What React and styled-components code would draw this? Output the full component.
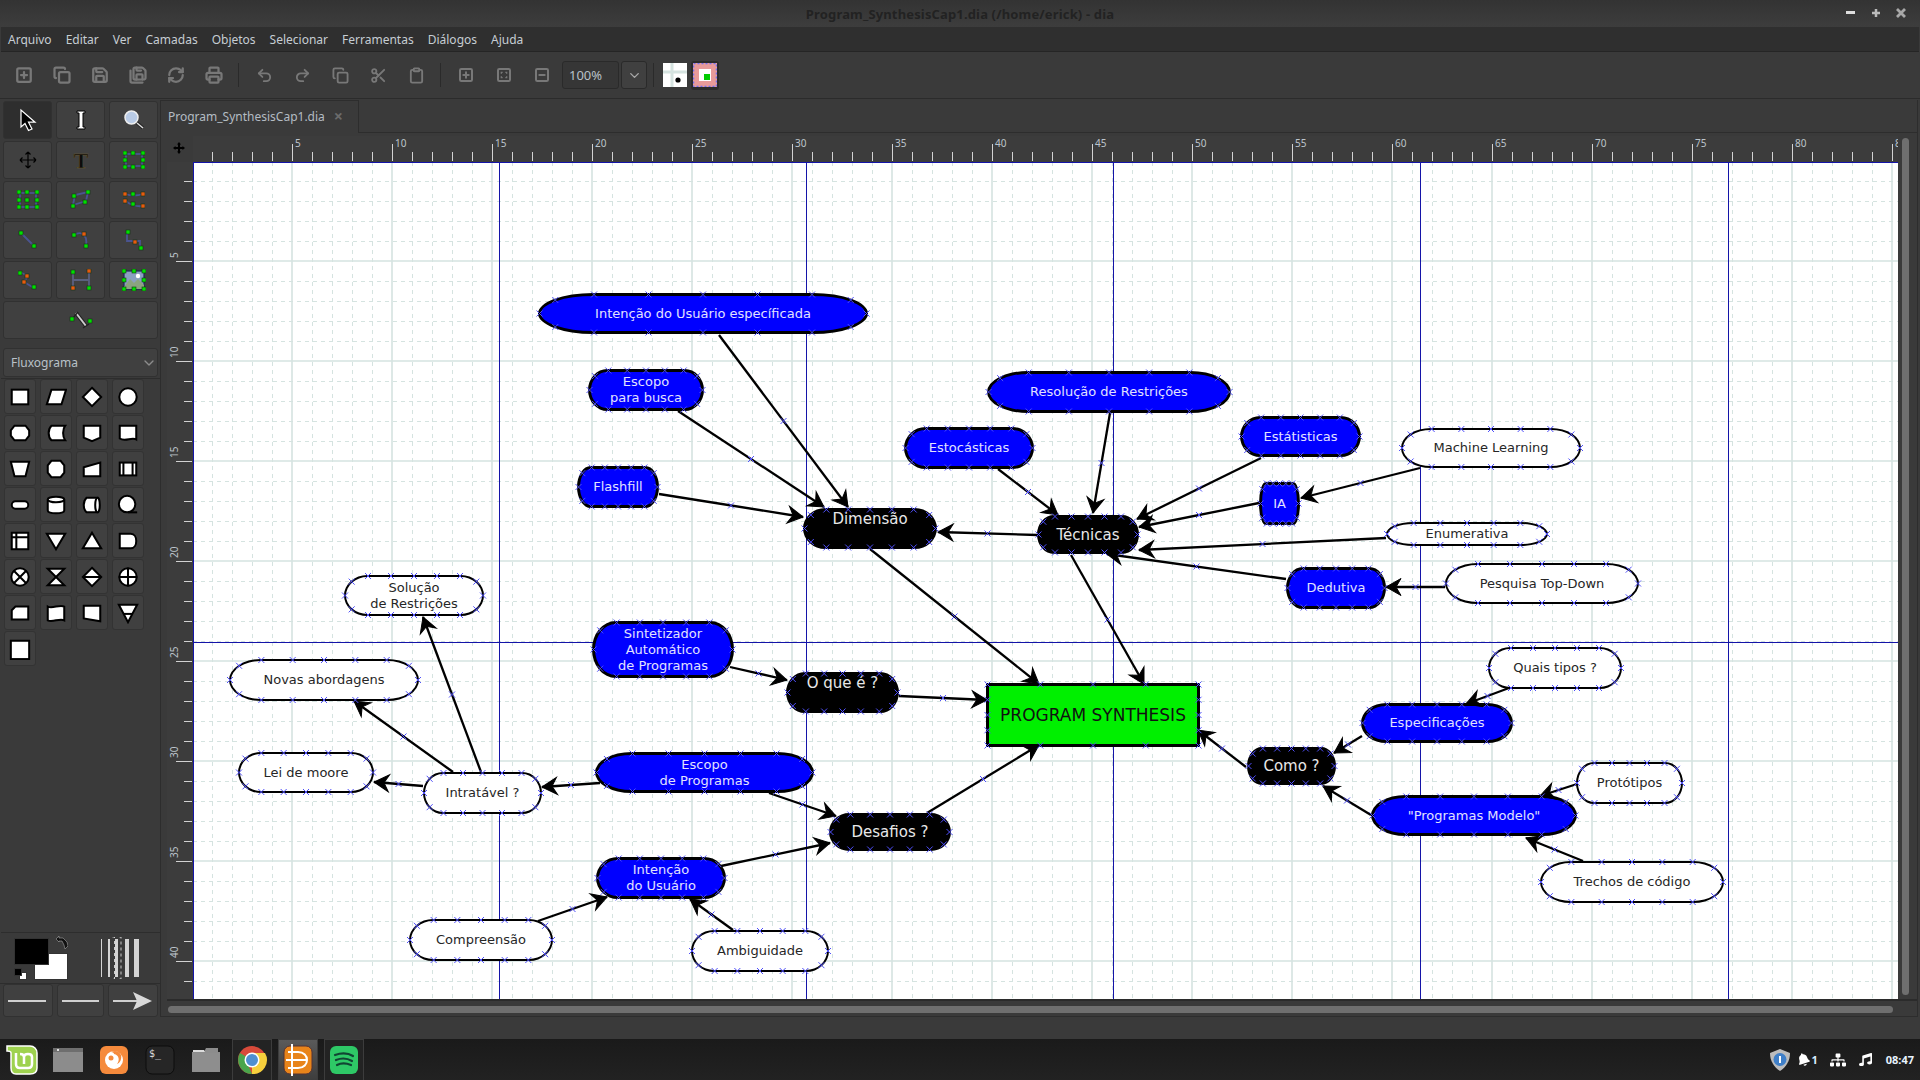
import React from "react";
import styled, { createGlobalStyle } from "styled-components";
import {
  SquarePlus, Copy, Save, SaveAll, RefreshCw, Printer, Undo2, Redo2, Scissors, Clipboard, SquareMinus, ChevronDown,
} from "lucide-react";
import { FaBell, FaSitemap, FaMusic } from "react-icons/fa";

const Global = createGlobalStyle`
  html, body { margin: 0; padding: 0; background: #3a3a3a; overflow: hidden; }
  body { font-family: "Noto Sans", sans-serif; font-size: 12px; color: #c9d0d6; }
`;

// canvas origin in page coordinates
const OX = 193;
const OY = 162;
const CW = 1704;
const CH = 836;

const Screen = styled.div`
  width: 1920px;
  height: 1080px;
  display: flex;
  flex-direction: column;
  background: #3a3a3a;
  overflow: hidden;
`;

const TitleBar = styled.div`
  height: 27px;
  flex: none;
  position: relative;
  display: flex;
  align-items: center;
  justify-content: center;
  background: linear-gradient(#333333, #3d3d3d);
`;

const TitleText = styled.span`
  font-weight: 700;
  font-size: 13px;
  letter-spacing: 0.15px;
  color: #222222;
`;

const WinControls = styled.div`
  position: absolute;
  right: 11px;
  top: 5px;
  display: flex;
  gap: 9px;
`;

const WinButton = styled.div`
  width: 16px;
  height: 16px;
  display: flex;
  align-items: center;
  justify-content: center;
`;

const MenuBar = styled.div`
  height: 25px;
  flex: none;
  display: flex;
  align-items: center;
  gap: 14px;
  padding-left: 7px;
  margin: 0 1px;
  background: #2f2f2f;
  border-bottom: 1px solid #252525;
  box-sizing: border-box;
  color: #c6cdd3;
`;

const ToolBar = styled.div`
  height: 47px;
  flex: none;
  display: flex;
  align-items: center;
  padding-left: 5px;
  background: #3a3a3a;
  border-bottom: 1px solid #2b2b2b;
  box-sizing: border-box;
`;

const BarButton = styled.div`
  width: 38px;
  height: 30px;
  display: flex;
  align-items: center;
  justify-content: center;
  color: #787878;
`;

const BarSep = styled.div`
  width: 1px;
  height: 24px;
  margin: 0 6px 0 5px;
  background: #2a2a2a;
`;

const ThumbSep = styled(BarSep)`
  margin: 0 7px 0 6px;
`;

const ZoomEntry = styled.div`
  width: 57px;
  height: 28px;
  margin-left: 1px;
  box-sizing: border-box;
  display: flex;
  align-items: center;
  padding-left: 6px;
  font-size: 13px;
  color: #b9c1c8;
  background: #363636;
  border: 1px solid #2a2a2a;
  border-radius: 3px;
`;

const ZoomArrow = styled.div`
  width: 26px;
  height: 28px;
  margin-left: 2px;
  box-sizing: border-box;
  display: flex;
  align-items: center;
  justify-content: center;
  color: #a8a8a8;
  background: #404040;
  border: 1px solid #2a2a2a;
  border-radius: 3px;
`;

const Thumb = styled.div`
  width: 28px;
  height: 29px;
  margin-left: ${(p) => (p.$pressed ? "2px" : "0")};
  display: flex;
  align-items: center;
  justify-content: center;
  border-radius: 3px;
  background: ${(p) => (p.$pressed ? "#2b2b2b" : "transparent")};
`;

const Main = styled.div`
  height: 918px;
  flex: none;
  display: flex;
`;

const SidePanel = styled.div`
  width: 160px;
  flex: none;
  display: flex;
  flex-direction: column;
`;

const ToolGrid = styled.div`
  display: grid;
  grid-template-columns: repeat(3, 49px);
  grid-auto-rows: 38px;
  gap: 2px 4px;
  padding: 2px 0 0 3px;
`;

const ToolButton = styled.div`
  display: flex;
  align-items: center;
  justify-content: center;
  grid-column: ${(p) => (p.$wide ? "span 3" : "auto")};
  background: ${(p) => (p.$active ? "#2e2e2e" : "#404040")};
  border: 1px solid #313131;
  border-radius: 3px;
  box-sizing: border-box;
`;

const Combo = styled.div`
  height: 29px;
  margin: 9px 2px 1px 3px;
  padding: 0 0 0 7px;
  display: flex;
  align-items: center;
  justify-content: space-between;
  font-size: 12px;
  color: #b9c1c8;
  background: #404040;
  border: 1px solid #313131;
  border-radius: 3px;
  box-sizing: border-box;
`;

const ShapeBox = styled.div`
  height: 555px;
  flex: none;
  margin-left: 1px;
  padding: 0 0 0 3px;
  display: grid;
  grid-template-columns: repeat(4, 32px);
  grid-auto-rows: 35px;
  gap: 1px 4px;
  align-content: start;
  border: 1px solid #2d2d2d;
  border-width: 1px 0 1px 0;
  box-sizing: border-box;
`;

const ShapeButton = styled.div`
  display: flex;
  align-items: center;
  justify-content: center;
  background: #404040;
  border: 1px solid #333333;
  border-radius: 3px;
  box-sizing: border-box;
`;

const ColorRow = styled.div`
  height: 51px;
  flex: none;
  display: flex;
  align-items: center;
  padding-left: 14px;
  gap: 34px;
  border-bottom: 1px solid #2d2d2d;
  box-sizing: border-box;
`;

const ColorWell = styled.div`
  position: relative;
  width: 53px;
  height: 44px;
`;

const Swatch = styled.div`
  position: absolute;
  left: ${(p) => p.$x}px;
  top: ${(p) => p.$y}px;
  width: ${(p) => p.$w}px;
  height: ${(p) => p.$h}px;
  background: ${(p) => (p.$dark ? "#000000" : "#ffffff")};
  border: 1px solid #333333;
  box-sizing: border-box;
`;

const SwapIcon = styled.svg`
  position: absolute;
  left: 41px;
  top: 0;
`;

const LineRow = styled.div`
  display: grid;
  grid-template-columns: 50px 47px 50px;
  gap: 4px;
  height: 33px;
  padding: 0 0 0 3px;
  box-sizing: border-box;
`;

const LineButton = styled(ToolButton)``;

const Notebook = styled.div`
  width: 1758px;
  flex: none;
  display: flex;
  flex-direction: column;
  border-right: 1px solid #2d2d2d;
  border-bottom: 1px solid #2d2d2d;
  border-left: 1px solid #2d2d2d;
  margin-top: 1px;
  box-sizing: border-box;
`;

const TabStrip = styled.div`
  height: 33px;
  flex: none;
  display: flex;
  box-sizing: border-box;
  border-bottom: 1px solid #2d2d2d;
`;

const Tab = styled.div`
  width: 198px;
  height: 33px;
  flex: none;
  display: flex;
  align-items: center;
  justify-content: space-between;
  padding: 0 15px 2px 7px;
  box-sizing: border-box;
  font-size: 12px;
  color: #b4bcc3;
  background: #3a3a3a;
  border: 1px solid #2d2d2d;
  border-width: 1px 1px 0 0;
`;

const TabClose = styled.span`
  font-size: 16px;
  font-weight: 700;
  color: #6b6b6b;
  line-height: 1;
`;

const CanvasArea = styled.div`
  flex: 1;
  padding: 3px 0 0 6px;
  display: grid;
  grid-template-columns: 26px 1705px 1fr;
  grid-template-rows: 26px 837px 1fr;
  min-height: 0;
`;

const Corner = styled.div`
  display: flex;
  align-items: center;
  justify-content: center;
  padding: 0 2px 2px 0;
  background: #3a3a3a;
`;

const RulerSvg = styled.svg`
  display: block;
  background: #3c3c3c;
`;

const VScroll = styled.div`
  grid-row: 1 / span 2;
  grid-column: 3;
  padding: 2px 0 0 4px;
`;

const ScrollThumb = styled.div`
  background: #6f6f6f;
  border-radius: 4px;
  width: ${(p) => (p.$horizontal ? "1725px" : "7px")};
  height: ${(p) => (p.$horizontal ? "7px" : "857px")};
`;

const HScroll = styled.div`
  grid-column: 1 / span 3;
  grid-row: 3;
  padding: 5px 0 0 1px;
  border-top: 2px solid #2b2b2b;
`;

const Canvas = styled.div`
  position: relative;
  overflow: hidden;
  background: #ffffff;
  width: ${CW + 1}px;
  height: ${CH + 1}px;
`;

const Layer = styled.svg`
  position: absolute;
  left: 0;
  top: 0;
`;

const skins = {
  blue: { bg: "#0000ff", fg: "#e2e2ff", size: 13, line: 3 },
  white: { bg: "#ffffff", fg: "#262626", size: 13, line: 2 },
  black: { bg: "#000000", fg: "#e8e8e8", size: 15, line: 3 },
  rect: { bg: "#00f000", fg: "#111111", size: 17, line: 3 },
};

const Node = styled.div.attrs(({ $n }) => ({
  style: {
    left: $n.x0 - OX,
    top: $n.y0 - OY,
    width: $n.x1 - $n.x0,
    height: $n.y1 - $n.y0,
    borderRadius: $n.kind === "rect" ? 0 : `${(($n.x1 - $n.x0) / 6).toFixed(1)}px / 50%`,
  },
}))`
  position: absolute;
  box-sizing: border-box;
  display: flex;
  align-items: ${(p) => (p.$n.up ? "flex-start" : "center")};
  justify-content: center;
  text-align: center;
  font-family: "DejaVu Sans", sans-serif;
  line-height: 16px;
  white-space: nowrap;
  border: ${(p) => skins[p.$n.kind].line}px solid #000000;
  background: ${(p) => skins[p.$n.kind].bg};
  color: ${(p) => skins[p.$n.kind].fg};
  font-size: ${(p) => skins[p.$n.kind].size}px;
`;

const TaskBar = styled.div`
  height: 41px;
  flex: none;
  margin-top: auto;
  display: flex;
  align-items: stretch;
  justify-content: space-between;
  padding-left: 2px;
  background: linear-gradient(#1a1a1a, #222222);
`;

const Launchers = styled.div`
  display: flex;
  gap: 6px;
`;

const Launcher = styled.div`
  width: 40px;
  display: flex;
  align-items: center;
  justify-content: center;
  box-sizing: border-box;
  border: ${(p) => (p.$state ? "1px solid #3c3c3c" : "1px solid transparent")};
  border-bottom: none;
  background: ${(p) => (p.$state === "focus" ? "linear-gradient(#5a5a5a, #3d3d3d)" : p.$state ? "#232323" : "transparent")};
`;

const Tray = styled.div`
  display: flex;
  align-items: center;
  padding-right: 6px;
  color: #ffffff;
`;

const TrayCount = styled.span`
  font-size: 11px;
  font-weight: 700;
  margin: 0 12px 0 1px;
  color: #d9ecff;
`;

const TraySlot = styled.div`
  display: flex;
  align-items: center;
  margin-right: ${(p) => p.$gap}px;
`;

const Bell = styled(FaBell)`
  transform: rotate(-18deg);
`;

const Clock = styled.span`
  font-size: 11px;
  font-weight: 700;
  color: #e8f3ff;
`;

// ---- diagram data, page coordinates ----
const nodes = [
  { id: "a", t: ["Intenção do Usuário específicada"], x0: 538, x1: 868, y0: 293, y1: 334, kind: "blue" },
  { id: "b", t: ["Escopo", "para busca"], x0: 588, x1: 704, y0: 369, y1: 411, kind: "blue" },
  { id: "c", t: ["Flashfill"], x0: 577, x1: 659, y0: 466, y1: 508, kind: "blue" },
  { id: "d", t: ["Dimensão"], x0: 803, x1: 937, y0: 508, y1: 549, kind: "black", up: 1 },
  { id: "e", t: ["Resolução de Restrições"], x0: 987, x1: 1231, y0: 371, y1: 413, kind: "blue" },
  { id: "f", t: ["Estocásticas"], x0: 904, x1: 1034, y0: 427, y1: 469, kind: "blue" },
  { id: "g", t: ["Estátisticas"], x0: 1240, x1: 1361, y0: 416, y1: 457, kind: "blue" },
  { id: "h", t: ["Machine Learning"], x0: 1401, x1: 1581, y0: 428, y1: 468, kind: "white" },
  { id: "i", t: ["IA"], x0: 1259, x1: 1300, y0: 482, y1: 525, kind: "blue" },
  { id: "j", t: ["Técnicas"], x0: 1037, x1: 1139, y0: 515, y1: 554, kind: "black" },
  { id: "k", t: ["Enumerativa"], x0: 1386, x1: 1548, y0: 522, y1: 546, kind: "white" },
  { id: "l", t: ["Dedutiva"], x0: 1286, x1: 1386, y0: 567, y1: 609, kind: "blue" },
  { id: "m", t: ["Pesquisa Top-Down"], x0: 1445, x1: 1639, y0: 563, y1: 604, kind: "white" },
  { id: "n", t: ["Solução", "de Restrições"], x0: 344, x1: 484, y0: 575, y1: 616, kind: "white" },
  { id: "o", t: ["Sintetizador", "Automático", "de Programas"], x0: 592, x1: 734, y0: 621, y1: 678, kind: "blue" },
  { id: "p", t: ["O que é ?"], x0: 786, x1: 899, y0: 672, y1: 713, kind: "black", up: 1 },
  { id: "q", t: ["PROGRAM SYNTHESIS"], x0: 986, x1: 1200, y0: 683, y1: 747, kind: "rect" },
  { id: "r", t: ["Como ?"], x0: 1247, x1: 1336, y0: 747, y1: 785, kind: "black" },
  { id: "s", t: ["Quais tipos ?"], x0: 1488, x1: 1622, y0: 647, y1: 689, kind: "white" },
  { id: "t", t: ["Especificações"], x0: 1361, x1: 1513, y0: 703, y1: 743, kind: "blue" },
  { id: "u", t: ["Novas abordagens"], x0: 229, x1: 419, y0: 659, y1: 701, kind: "white" },
  { id: "v", t: ["Lei de moore"], x0: 238, x1: 374, y0: 752, y1: 793, kind: "white" },
  { id: "w", t: ["Intratável ?"], x0: 423, x1: 542, y0: 772, y1: 814, kind: "white" },
  { id: "x", t: ["Escopo", "de Programas"], x0: 595, x1: 814, y0: 752, y1: 793, kind: "blue" },
  { id: "y", t: ["Desafios ?"], x0: 829, x1: 951, y0: 813, y1: 851, kind: "black" },
  { id: "z", t: ["Protótipos"], x0: 1576, x1: 1683, y0: 762, y1: 804, kind: "white" },
  { id: "aa", t: ['"Programas Modelo"'], x0: 1371, x1: 1577, y0: 795, y1: 836, kind: "blue" },
  { id: "ab", t: ["Intenção", "do Usuário"], x0: 596, x1: 726, y0: 857, y1: 899, kind: "blue" },
  { id: "ac", t: ["Compreensão"], x0: 409, x1: 553, y0: 919, y1: 961, kind: "white" },
  { id: "ad", t: ["Ambiguidade"], x0: 691, x1: 829, y0: 930, y1: 972, kind: "white" },
  { id: "ae", t: ["Trechos de código"], x0: 1540, x1: 1724, y0: 861, y1: 903, kind: "white" },
];

const arrows = [
  [719, 335, 848, 507], [678, 411, 824, 507], [659, 494, 803, 517], [870, 549, 1039, 684],
  [1037, 535, 938, 532], [1071, 555, 1144, 684], [1110, 413, 1093, 513], [998, 469, 1058, 515],
  [1261, 458, 1137, 519], [1259, 503, 1139, 527], [1420, 468, 1301, 498], [1386, 538, 1139, 550],
  [1286, 579, 1107, 554], [1445, 587, 1386, 587], [899, 696, 987, 700], [730, 667, 787, 680],
  [927, 813, 1039, 745], [1246, 767, 1198, 730], [1362, 736, 1334, 753], [1371, 815, 1323, 786],
  [1509, 688, 1466, 704], [1577, 784, 1540, 796], [1583, 861, 1526, 838], [481, 772, 423, 617],
  [453, 772, 354, 701], [423, 786, 374, 782], [600, 783, 542, 787], [769, 793, 836, 816],
  [721, 866, 830, 843], [538, 921, 607, 897], [733, 930, 690, 899],
];

const guidesX = [499, 806, 1113, 1420, 1728];
const guidesY = [642];

function range(from, to, step) {
  const out = [];
  for (let v = from; v <= to; v += step) out.push(v);
  return out;
}

// connection points of a flowchart shape, they sit on the middle of the outline
function crossesFor(n) {
  const inset = n.kind === "white" ? 1 : 1.5;
  const x0 = n.x0 + inset;
  const x1 = n.x1 - inset;
  const y0 = n.y0 + inset;
  const y1 = n.y1 - inset;
  const w = x1 - x0;
  const h = y1 - y0;
  const pts = [];
  if (n.kind === "rect") {
    for (let k = 0; k <= 4; k++) {
      pts.push([x0 + (w * k) / 4, y0], [x0 + (w * k) / 4, y1]);
      if (k > 0 && k < 4) pts.push([x0, y0 + (h * k) / 4], [x1, y0 + (h * k) / 4]);
    }
    return pts;
  }
  for (let k = 1; k <= 5; k++) pts.push([x0 + (w * k) / 6, y0], [x0 + (w * k) / 6, y1]);
  const dx = (w / 6) * 0.29;
  const dy = (h / 2) * 0.29;
  pts.push(
    [x0, y0 + h / 2], [x1, y0 + h / 2],
    [x0 + dx, y0 + dy], [x1 - dx, y0 + dy],
    [x0 + dx, y1 - dy], [x1 - dx, y1 - dy]
  );
  return pts;
}

function Cross({ x, y }) {
  return <path d={`M${x - 3} ${y - 3}L${x + 3} ${y + 3}M${x + 3} ${y - 3}L${x - 3} ${y + 3}`} stroke="#5050fa" strokeWidth="1" fill="none" />;
}

function Arrow({ a }) {
  const [x1, y1, x2, y2] = a;
  const angle = (Math.atan2(y2 - y1, x2 - x1) * 180) / Math.PI;
  return (
    <g>
      <line x1={x1} y1={y1} x2={x2} y2={y2} stroke="#000" strokeWidth="2.3" />
      <path d="M0 0L-15 -8.5L-10 0L-15 8.5Z" fill="#000" stroke="#000" strokeWidth="1" transform={`translate(${x2} ${y2}) rotate(${angle})`} />
      <Cross x={(x1 + x2) / 2} y={(y1 + y2) / 2} />
    </g>
  );
}

function GridLayer() {
  return (
    <Layer width={CW + 1} height={CH + 1} viewBox={`${OX} ${OY} ${CW + 1} ${CH + 1}`}>
      <g stroke="#d5e3e0" strokeWidth="1" strokeDasharray="4 4" fill="none">
        {range(212, 1896, 20).filter((x) => x % 100 !== 92).map((x) => <line key={x} x1={x + 0.5} x2={x + 0.5} y1={OY} y2={OY + CH + 1} />)}
        {range(181, 997, 20).filter((y) => y % 100 !== 61).map((y) => <line key={y} y1={y + 0.5} y2={y + 0.5} x1={OX} x2={OX + CW + 1} />)}
      </g>
      <g stroke="#d5e3e0" strokeWidth="1.6" fill="none">
        {range(292, 1896, 100).map((x) => <line key={x} x1={x} x2={x} y1={OY} y2={OY + CH + 1} />)}
        {range(261, 997, 100).map((y) => <line key={y} y1={y} y2={y} x1={OX} x2={OX + CW + 1} />)}
      </g>
      <g stroke="#1414a8" strokeWidth="1" fill="none">
        {guidesX.map((x) => <line key={x} x1={x + 0.5} x2={x + 0.5} y1={OY} y2={OY + CH + 1} />)}
        {guidesY.map((y) => <line key={y} y1={y + 0.5} y2={y + 0.5} x1={OX} x2={OX + CW + 1} />)}
        <line x1={OX} x2={OX + CW + 1} y1={OY} y2={OY} strokeWidth="2" />
        <line x1={OX} x2={OX} y1={OY} y2={OY + CH + 1} strokeWidth="2" />
      </g>
    </Layer>
  );
}

function TopLayer() {
  return (
    <Layer width={CW + 1} height={CH + 1} viewBox={`${OX} ${OY} ${CW + 1} ${CH + 1}`}>
      {arrows.map((a, i) => <Arrow key={i} a={a} />)}
      {nodes.flatMap((n) => crossesFor(n).map(([x, y], i) => <Cross key={n.id + i} x={x} y={y} />))}
    </Layer>
  );
}

function TopRuler() {
  return (
    <RulerSvg width={1705} height={26} viewBox="193 136 1705 26">
      <g stroke="#d2d2d2" strokeWidth="1">
        {range(212, 1896, 20).map((x) => <line key={x} x1={x + 0.5} x2={x + 0.5} y1={x % 100 === 92 ? 144 : 152} y2={161} />)}
      </g>
      <g fill="#bcc4cb" fontFamily="Noto Sans, sans-serif" fontSize="10">
        {range(5, 85, 5).map((v) => <text key={v} x={192 + v * 20 + 3} y={147}>{v}</text>)}
      </g>
    </RulerSvg>
  );
}

function LeftRuler() {
  return (
    <RulerSvg width={26} height={837} viewBox="167 162 26 837">
      <g stroke="#d2d2d2" strokeWidth="1">
        {range(181, 997, 20).map((y) => <line key={y} y1={y + 0.5} y2={y + 0.5} x1={y % 100 === 61 ? 176 : 184} x2={192} />)}
      </g>
      <g fill="#bcc4cb" fontFamily="Noto Sans, sans-serif" fontSize="10">
        {range(5, 40, 5).map((v) => {
          const y = 161 + v * 20 - 3;
          return <text key={v} x={178} y={y} transform={`rotate(-90 178 ${y})`}>{v}</text>;
        })}
      </g>
    </RulerSvg>
  );
}

// ---- tool palette ----
function Pt({ x, y, c = "#00e000" }) {
  return <rect x={x - 2} y={y - 2} width="4" height="4" fill={c} stroke="#123312" strokeWidth="0.6" />;
}

const ghost = { stroke: "#4a5490", strokeWidth: 1.8, fill: "none" };
const R = "#e85a10";

const toolIcons = [
  <svg width="22" height="24" viewBox="0 0 22 24"><path d="M4 2V19L8 15.5L11.5 22.5L15 21L11.5 14.2H18Z" fill="#000" stroke="#fff" strokeWidth="1.2" /></svg>,
  <svg width="14" height="22" viewBox="0 0 14 22"><path d="M3 2H11V4H9V18H11V20H3V18H5V4H3Z" fill="#fff" stroke="#000" strokeWidth="1" /></svg>,
  <svg width="22" height="22" viewBox="0 0 22 22"><line x1="13" y1="13" x2="20" y2="19" stroke="#222" strokeWidth="3.5" /><line x1="14" y1="14" x2="20" y2="19" stroke="#ddd" strokeWidth="1.5" /><circle cx="8.5" cy="8.5" r="6.5" fill="#b9cbe6" stroke="#eee" strokeWidth="1.5" /></svg>,
  <svg width="18" height="18" viewBox="0 0 18 18"><path d="M9 1V17M1 9H17M9 1L6.5 3.5M9 1L11.5 3.5M9 17L6.5 14.5M9 17L11.5 14.5M1 9L3.5 6.5M1 9L3.5 11.5M17 9L14.5 6.5M17 9L14.5 11.5" stroke="#000" strokeWidth="1.2" fill="none" /></svg>,
  <svg width="20" height="24" viewBox="0 0 20 24"><text x="10" y="20" textAnchor="middle" fontFamily="Liberation Serif, serif" fontWeight="700" fontSize="22" fill="#0c0c0c" stroke="#6d5c2c" strokeWidth="0.4">T</text></svg>,
  <svg width="22" height="18" viewBox="0 0 22 18"><rect x="3" y="3" width="16" height="12" {...ghost} /><Pt x={2} y={2} /><Pt x={10} y={2} /><Pt x={20} y={2} /><Pt x={2} y={9} /><Pt x={20} y={9} /><Pt x={2} y={16} /><Pt x={10} y={16} /><Pt x={20} y={16} /></svg>,
  <svg width="22" height="20" viewBox="0 0 22 20"><rect x="3" y="3" width="16" height="14" {...ghost} /><Pt x={2} y={2} /><Pt x={10} y={2} /><Pt x={20} y={2} /><Pt x={2} y={10} /><Pt x={10} y={10} /><Pt x={20} y={10} /><Pt x={2} y={17} /><Pt x={10} y={17} /><Pt x={20} y={17} /></svg>,
  <svg width="22" height="20" viewBox="0 0 22 20"><path d="M3 15L5 5L18 2L16 11Z" {...ghost} /><Pt x={3} y={16} /><Pt x={4} y={6} /><Pt x={18} y={2} /><Pt x={15} y={12} /></svg>,
  <svg width="22" height="18" viewBox="0 0 22 18"><path d="M2 3C8 5 14 5 20 3M2 9C6 14 14 16 20 15" {...ghost} /><Pt x={2} y={3} c={R} /><Pt x={10} y={3} /><Pt x={20} y={3} c={R} /><Pt x={2} y={10} c={R} /><Pt x={10} y={13} /><Pt x={20} y={15} c={R} /></svg>,
  <svg width="20" height="20" viewBox="0 0 20 20"><path d="M3 3L16 16" {...ghost} /><Pt x={3} y={3} /><Pt x={16} y={16} /></svg>,
  <svg width="20" height="20" viewBox="0 0 20 20"><path d="M3 5C9 1 17 3 15 16" {...ghost} /><Pt x={3} y={5} /><Pt x={13} y={4} c={R} /><Pt x={15} y={16} /></svg>,
  <svg width="20" height="22" viewBox="0 0 20 22"><path d="M3 3V12H16V19" {...ghost} /><Pt x={4} y={3} /><Pt x={11} y={13} c={R} /><Pt x={17} y={19} /></svg>,
  <svg width="20" height="20" viewBox="0 0 20 20"><path d="M2 2L10 6L6 12L16 18" {...ghost} /><Pt x={2} y={3} /><Pt x={9} y={6} c={R} /><Pt x={6} y={12} c={R} /><Pt x={16} y={17} /></svg>,
  <svg width="22" height="22" viewBox="0 0 22 22"><path d="M3 3V19M3 11H19M19 3V19" {...ghost} stroke="#5a6080" /><Pt x={3} y={3} /><Pt x={19} y={2} c={R} /><Pt x={3} y={19} c={R} /><Pt x={19} y={19} /></svg>,
  <svg width="24" height="22" viewBox="0 0 24 22"><rect x="2" y="2" width="20" height="18" fill="#8aa0c0" stroke="#1d2c55" strokeWidth="1.2" /><path d="M2 18L8 10L12 14L16 10L22 16V20H2Z" fill="#8aa37f" /><circle cx="16" cy="7" r="2.2" fill="#fff" /><Pt x={2} y={2} /><Pt x={12} y={2} /><Pt x={22} y={2} /><Pt x={2} y={11} /><Pt x={22} y={11} /><Pt x={2} y={20} /><Pt x={12} y={20} /><Pt x={22} y={20} /></svg>,
  <svg width="24" height="20" viewBox="0 0 24 20"><path d="M7 3L17 16" stroke="#222" strokeWidth="4" /><path d="M7 3L17 16" stroke="#ccc" strokeWidth="2" /><path d="M4 8L9 2M14 18L20 14" stroke="#222" strokeWidth="1.2" /><Pt x={3} y={9} /><Pt x={21} y={11} /></svg>,
];

const S = { fill: "#fff", stroke: "#000", strokeWidth: 2.2, strokeLinejoin: "miter" };

const shapes = [
  <rect x="3" y="4" width="18" height="16" {...S} />,
  <path d="M7 4H23L18 20H2Z" {...S} />,
  <path d="M12 2L22 12L12 22L2 12Z" {...S} />,
  <circle cx="12" cy="12" r="9.5" {...S} />,
  <path d="M6 4H18L22 9V15L18 20H6L2 15V9Z" {...S} />,
  <path d="M7 4H22C19 8 19 16 22 20H7C3 16 3 8 7 4Z" {...S} />,
  <path d="M3 4H21V17L12 21L3 17Z" {...S} />,
  <path d="M3 4H21V19C16 16 9 22 3 18Z" {...S} />,
  <path d="M2 4H22L18 20H6Z" {...S} />,
  <path d="M7 3H17L21 8V16L17 21H7L3 16V8Z" {...S} />,
  <path d="M3 10L21 5V20H3Z" {...S} />,
  <><rect x="3" y="5" width="18" height="14" {...S} /><path d="M7 5V19M17 5V19" {...S} /></>,
  <rect x="3" y="8" width="18" height="8" rx="4" {...S} />,
  <><path d="M3 6V18C3 22 21 22 21 18V6" {...S} /><ellipse cx="12" cy="6" rx="9" ry="3" {...S} /></>,
  <><path d="M6 4H18V20H6C2 16 2 8 6 4Z" {...S} /><ellipse cx="18" cy="12" rx="2.5" ry="8" {...S} /></>,
  <><circle cx="11" cy="11" r="9" {...S} /><path d="M12 20H22" {...S} /></>,
  <><rect x="3" y="3" width="18" height="18" {...S} /><path d="M3 8H21M8 3V21" {...S} /></>,
  <path d="M2 4H22L12 21Z" {...S} />,
  <path d="M12 3L22 20H2Z" {...S} />,
  <path d="M3 4H15C23 4 23 20 15 20H3Z" {...S} />,
  <><circle cx="12" cy="12" r="9.5" {...S} /><path d="M5 5L19 19M19 5L5 19" {...S} /></>,
  <path d="M3 3H21L3 21H21Z" {...S} />,
  <><path d="M12 2L22 12L12 22L2 12Z" {...S} /><path d="M2 12H22" {...S} /></>,
  <><circle cx="12" cy="12" r="9.5" {...S} /><path d="M12 2V22M2 12H22" {...S} /></>,
  <path d="M7 5H21V19H3V9Z" {...S} />,
  <path d="M3 5C8 8 16 2 21 5V20C16 17 8 23 3 20Z" {...S} />,
  <path d="M3 4H21V21L3 18Z" {...S} />,
  <><path d="M2 3H22L12 22Z" {...S} /><path d="M7 13H17" {...S} /></>,
  <rect x="2" y="3" width="20" height="20" {...S} />,
];

const Brand = ({ children }) => <svg width="32" height="32" viewBox="0 0 32 32">{children}</svg>;

const launchers = [
  { icon: <Brand><path d="M1 2H24C28 2 31 5 31 9V24C31 28 28 30 24 30H10C6 30 5 27 5 24V9C5 7 3 7 1 7Z" fill="#9ed24f" stroke="#fff" strokeWidth="1.5" /><path d="M10 9V20C10 23 12 24 14 24H22C25 24 26 22 26 20V13C26 11 24 10 22 10C20 10 18 11 18 13V20M18 13C18 11 16 10 14 10" fill="none" stroke="#fff" strokeWidth="2.5" /></Brand> },
  { icon: <Brand><rect x="1" y="4" width="30" height="24" fill="#8c8c8c" /><rect x="1" y="4" width="30" height="4" fill="#6e6e6e" /><rect x="5" y="5" width="2" height="2" fill="#ddd" /></Brand> },
  { icon: <Brand><rect x="2" y="2" width="28" height="28" rx="6" fill="#f58a3c" /><circle cx="16" cy="16" r="9" fill="#fff" /><path d="M16 10C21 11 22 16 19 20C22 19 24 15 23 11C21 7 17 6 13 8C15 8 16 9 16 10Z" fill="#f58a3c" /><circle cx="13" cy="14" r="2.5" fill="#f58a3c" /></Brand> },
  { icon: <Brand><rect x="2" y="2" width="28" height="28" rx="6" fill="#262626" stroke="#0c0c0c" /><text x="5" y="13" fontFamily="DejaVu Sans Mono, monospace" fontSize="10" fill="#ddd">$_</text></Brand> },
  { icon: <Brand><path d="M2 8H14L16 4H28V8H30V28H2Z" fill="#8c8c8c" /><path d="M3 6H14L15 8H3Z" fill="#ddd" /><rect x="2" y="9" width="28" height="19" rx="1" fill="#8e8e8e" /></Brand> },
  { state: "on", icon: <Brand><circle cx="16" cy="16" r="14" fill="#d84a3a" /><path d="M16 16L3.5 22A14 14 0 0 1 4 9Z" fill="#4aa54b" /><path d="M16 30A14 14 0 0 1 3.5 22L10 16Z" fill="#4aa54b" /><path d="M16 9H29A14 14 0 0 1 16 30Z" fill="#f6cf3c" /><circle cx="16" cy="16" r="7.5" fill="#fff" /><circle cx="16" cy="16" r="6" fill="#4f8fd0" /></Brand> },
  { state: "focus", icon: <Brand><rect x="2" y="2" width="28" height="28" rx="6" fill="#e8841a" stroke="#533" strokeWidth="1" /><path d="M10 0V32M4 16H24M6 8H16C28 8 28 24 16 24H6" fill="none" stroke="#fff" strokeWidth="2" /></Brand> },
  { state: "on", icon: <Brand><rect x="2" y="2" width="28" height="28" rx="6" fill="#2ec866" /><path d="M7 11C13 9 20 9 25 12M8 16C13 14 19 14 24 17M9 21C13 19 18 19 23 21" fill="none" stroke="#143" strokeWidth="2.2" strokeLinecap="round" /></Brand> },
];

// zoom-to-fit: rounded box with four corner marks
function FitBox({ size, strokeWidth }) {
  return (
    <svg width={size} height={size} viewBox="0 0 24 24" fill="none" stroke="currentColor" strokeWidth={strokeWidth}>
      <rect x="3" y="3" width="18" height="18" rx="2" />
      <path d="M8 10V8H10M14 8H16V10M16 14V16H14M10 16H8V14" strokeWidth="2" />
    </svg>
  );
}

const fileIcons = [SquarePlus, Copy, Save, SaveAll, RefreshCw, Printer];
const editIcons = [Undo2, Redo2, Copy, Scissors, Clipboard];
const zoomIcons = [SquarePlus, FitBox, SquareMinus];
const menus = ["Arquivo", "Editar", "Ver", "Camadas", "Objetos", "Selecionar", "Ferramentas", "Diálogos", "Ajuda"];

export default function App() {
  return (
    <Screen>
      <Global />
      <TitleBar>
        <TitleText>Program_SynthesisCap1.dia (/home/erick) - dia</TitleText>
        <WinControls>
          <WinButton><svg width="10" height="4" viewBox="0 0 10 4"><rect width="9" height="3" y="0" fill="#ddd" /></svg></WinButton>
          <WinButton><svg width="10" height="10" viewBox="0 0 10 10"><path d="M5 1V9M1 5H9" stroke="#bbb" strokeWidth="2.5" /></svg></WinButton>
          <WinButton><svg width="10" height="10" viewBox="0 0 10 10"><path d="M1 1L9 9M9 1L1 9" stroke="#a8a8a8" strokeWidth="2.8" /></svg></WinButton>
        </WinControls>
      </TitleBar>
      <MenuBar>{menus.map((m) => <span key={m}>{m}</span>)}</MenuBar>
      <ToolBar>
        {fileIcons.map((I, i) => <BarButton key={i}><I size={18} strokeWidth={3} /></BarButton>)}
        <BarSep />
        {editIcons.map((I, i) => <BarButton key={i}><I size={17} strokeWidth={2.6} /></BarButton>)}
        <BarSep />
        {zoomIcons.map((I, i) => <BarButton key={i}><I size={16} strokeWidth={3} /></BarButton>)}
        <ZoomEntry>100%</ZoomEntry>
        <ZoomArrow><ChevronDown size={15} strokeWidth={2.2} /></ZoomArrow>
        <ThumbSep />
        <Thumb>
          <svg width="24" height="24" viewBox="0 0 24 24"><rect width="24" height="24" fill="#fff" /><path d="M9 0V24M0 9H24" stroke="#d5e3e0" strokeWidth="3" /><circle cx="15" cy="17" r="2.6" fill="#000" /></svg>
        </Thumb>
        <Thumb $pressed>
          <svg width="24" height="24" viewBox="0 0 24 24"><rect width="24" height="24" fill="#e89a9a" /><rect x="6" y="6" width="12" height="12" fill="#fff" /><rect x="11" y="11" width="6" height="6" fill="#0c0" /><rect x="0.5" y="0.5" width="23" height="23" fill="none" stroke="#7070f0" strokeWidth="1.5" strokeDasharray="2 2" /></svg>
        </Thumb>
      </ToolBar>
      <Main>
        <SidePanel>
          <ToolGrid>
            {toolIcons.map((icon, i) => <ToolButton key={i} $active={i === 0} $wide={i === 15}>{icon}</ToolButton>)}
          </ToolGrid>
          <Combo>Fluxograma<ChevronDown size={16} strokeWidth={2} color="#8c8c8c" /></Combo>
          <ShapeBox>
            {shapes.map((s, i) => (
              <ShapeButton key={i}><svg width="22" height="22" viewBox="0 0 24 24">{s}</svg></ShapeButton>
            ))}
          </ShapeBox>
          <ColorRow>
            <ColorWell>
              <Swatch $x={20} $y={17} $w={34} $h={27} />
              <Swatch $dark $x={0} $y={2} $w={35} $h={27} />
              <Swatch $x={5} $y={36} $w={8} $h={8} />
              <Swatch $dark $x={0} $y={32} $w={8} $h={8} />
              <SwapIcon width="13" height="13" viewBox="0 0 13 13"><path d="M1 3L4 0V2H8L12 6L13 10L10 13L9 9L7 5H4V6Z" fill="#111" stroke="#bbb" strokeWidth="0.5" /></SwapIcon>
            </ColorWell>
            <svg width="42" height="42" viewBox="0 0 42 42">
              <g fill="#d4d4d4">
                <rect x="0" y="2" width="1" height="38" />
                <rect x="7" y="2" width="2" height="38" />
                <rect x="14" y="2" width="3" height="38" />
                <rect x="24" y="2" width="4" height="38" />
                <rect x="33" y="2" width="5" height="38" />
              </g>
              <path d="M11.5 0H13.5V42H11.5M18.5 0H20V42H18.5" stroke="#ccc" strokeDasharray="3 3" fill="none" />
            </svg>
          </ColorRow>
          <LineRow>
            <LineButton><svg width="40" height="4"><rect width="38" height="2" y="1" fill="#d0d0d0" /></svg></LineButton>
            <LineButton><svg width="40" height="4"><rect width="37" height="2" y="1" fill="#d0d0d0" x="1" /></svg></LineButton>
            <LineButton><svg width="42" height="20" viewBox="0 0 42 20"><rect x="1" y="9" width="24" height="2" fill="#d0d0d0" /><path d="M21 1L40 10L21 19L25 10Z" fill="#d8d8d8" /></svg></LineButton>
          </LineRow>
        </SidePanel>
        <Notebook>
          <TabStrip>
            <Tab>Program_SynthesisCap1.dia<TabClose>×</TabClose></Tab>
          </TabStrip>
          <CanvasArea>
            <Corner>
              <svg width="12" height="12" viewBox="0 0 12 12"><path d="M6 0L8 2.5H7V5H9.5V4L12 6L9.5 8V7H7V9.5H8L6 12L4 9.5H5V7H2.5V8L0 6L2.5 4V5H5V2.5H4Z" fill="#000" /></svg>
            </Corner>
            <TopRuler />
            <VScroll><ScrollThumb /></VScroll>
            <LeftRuler />
            <Canvas>
              <GridLayer />
              {nodes.map((n) => (
                <Node key={n.id} $n={n}>
                  <div>{n.t.map((line) => <div key={line}>{line}</div>)}</div>
                </Node>
              ))}
              <TopLayer />
            </Canvas>
            <HScroll><ScrollThumb $horizontal /></HScroll>
          </CanvasArea>
        </Notebook>
      </Main>
      <TaskBar>
        <Launchers>
          {launchers.map((l, i) => <Launcher key={i} $state={l.state}>{l.icon}</Launcher>)}
        </Launchers>
        <Tray>
          <TraySlot $gap={7}>
            <svg width="20" height="22" viewBox="0 0 20 22"><path d="M10 0L20 4C20 12 16 18 10 22C4 18 0 12 0 4Z" fill="#bcbcbc" /><circle cx="10" cy="10.5" r="6.5" fill="#3f7fc8" /><rect x="9" y="7" width="2" height="7" fill="#fff" /></svg>
          </TraySlot>
          <Bell size={13} />
          <TrayCount>1</TrayCount>
          <TraySlot $gap={13}><FaSitemap size={16} /></TraySlot>
          <TraySlot $gap={14}><FaMusic size={13} /></TraySlot>
          <Clock>08:47</Clock>
        </Tray>
      </TaskBar>
    </Screen>
  );
}
